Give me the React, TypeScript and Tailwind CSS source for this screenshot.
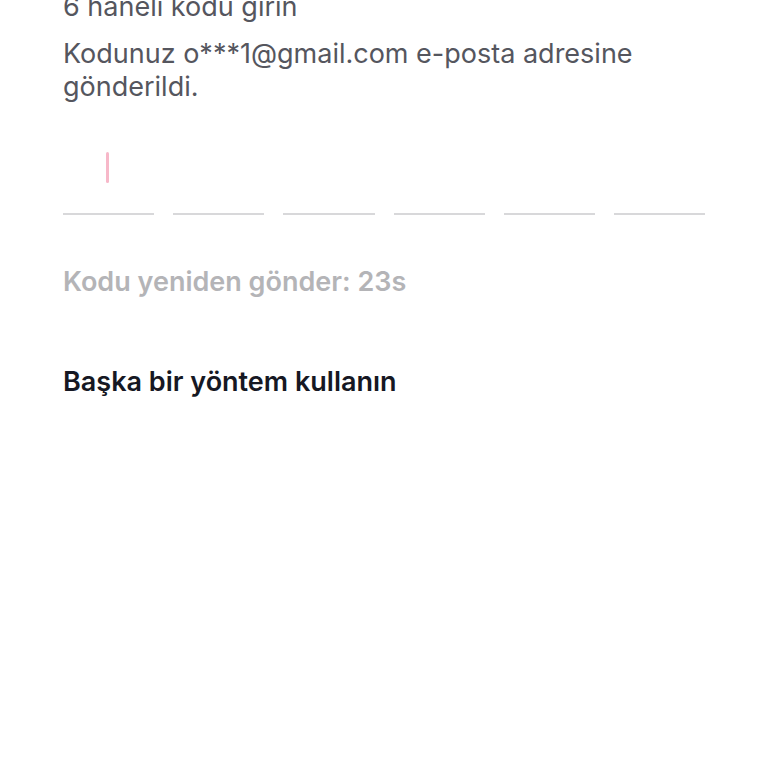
import React from 'react';

const CodeSlot = ({ active }: { active?: boolean }) => (
  <div className="relative h-[64px] flex-1 border-b-2 border-[#d8d8da]">
    {active && <span className="absolute left-[43px] top-[1px] h-[31px] w-[3px] rounded-full bg-[#f7b8c9]" />}
  </div>
);

export default function App() {
  return (
    <div className="min-h-screen bg-white px-[63px] font-['Inter','Noto_Sans',sans-serif] text-[27px] leading-[33px]">
      <div className="-mt-[10px] text-[#55565e]">6 haneli kodu girin</div>
      <p className="mt-[14px] text-[#55565e]">Kodunuz o***1@gmail.com e-posta adresine gönderildi.</p>

      <div className="mt-[48px] flex gap-[19px]">
        {[0, 1, 2, 3, 4, 5].map((i) => (
          <CodeSlot key={i} active={i === 0} />
        ))}
      </div>

      <div className="mt-[50px] font-semibold text-[#b4b4b7]">Kodu yeniden gönder: 23s</div>

      <button className="mt-[67px] block font-semibold text-[#161823]">Başka bir yöntem kullanın</button>
    </div>
  );
}
